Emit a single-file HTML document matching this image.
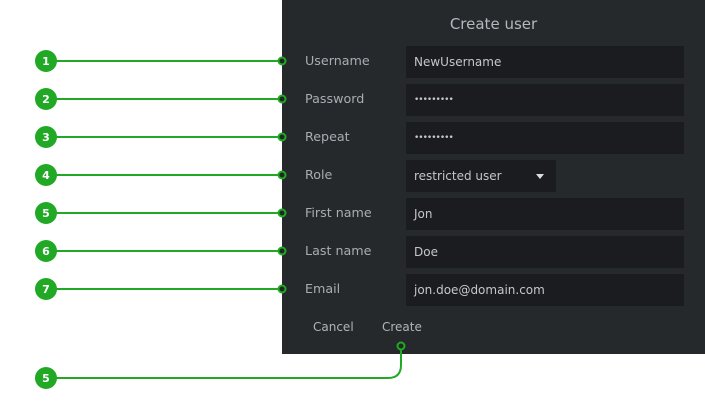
<!DOCTYPE html><html><head><style>
body{margin:0;width:705px;height:409px;background:#fff;position:relative;overflow:hidden;font-family:"DejaVu Sans","Liberation Sans",sans-serif}
.panel{position:absolute;left:282px;top:0;width:423px;height:354px;background:#26292c}
.t{position:absolute;left:0;width:423px;top:15px;text-align:center;color:#b4b8bc;font-size:15px}
.l{position:absolute;left:23px;color:#a9adb1;font-size:12.7px}
.i{position:absolute;left:124px;width:278px;height:32px;background:#1a1c1f;color:#c4c7ca;font-size:12px;line-height:32px;padding-left:8px;box-sizing:border-box}
.p{font-size:9px;letter-spacing:-1px}
.b{position:absolute;top:320px;color:#b0b4b8;font-size:12px}
</style></head><body>
<div class="panel">
<div class="t">Create user</div>
<div class="l" style="top:53px">Username</div><div class="i" style="top:46px">NewUsername</div>
<div class="l" style="top:91px">Password</div><div class="i p" style="top:84px">•••••••••</div>
<div class="l" style="top:129px">Repeat</div><div class="i p" style="top:122px">•••••••••</div>
<div class="l" style="top:167px">Role</div><div class="i" style="top:160px;width:150px">restricted user<span style="position:absolute;left:130px;top:14px;border-left:4px solid transparent;border-right:4px solid transparent;border-top:5px solid #ddd;width:0;height:0"></span></div>
<div class="l" style="top:205px">First name</div><div class="i" style="top:198px">Jon</div>
<div class="l" style="top:243px">Last name</div><div class="i" style="top:236px">Doe</div>
<div class="l" style="top:281px">Email</div><div class="i" style="top:274px">jon.doe@domain.com</div>
<div class="b" style="left:31px">Cancel</div><div class="b" style="left:100px">Create</div>
</div>
<svg width="705" height="409" style="position:absolute;left:0;top:0" font-family="DejaVu Sans, Liberation Sans, sans-serif">
<g stroke="#21a926" stroke-width="2" fill="none">
<line x1="45" y1="61" x2="282" y2="61"/><line x1="45" y1="99" x2="282" y2="99"/><line x1="45" y1="137" x2="282" y2="137"/><line x1="45" y1="175" x2="282" y2="175"/><line x1="45" y1="213" x2="282" y2="213"/><line x1="45" y1="251" x2="282" y2="251"/><line x1="45" y1="289" x2="282" y2="289"/>
<path d="M45 378 H388 Q401 378 401 365 V347"/>
</g>
<g fill="#1e2a1f" stroke="#21a926" stroke-width="2">
<circle cx="282" cy="61" r="3.5"/><circle cx="282" cy="99" r="3.5"/><circle cx="282" cy="137" r="3.5"/><circle cx="282" cy="175" r="3.5"/><circle cx="282" cy="213" r="3.5"/><circle cx="282" cy="251" r="3.5"/><circle cx="282" cy="289" r="3.5"/><circle cx="401" cy="346" r="3.5"/>
</g>
<g fill="#21a926"><circle cx="46" cy="61" r="11"/><circle cx="46" cy="99" r="11"/><circle cx="46" cy="137" r="11"/><circle cx="46" cy="175" r="11"/><circle cx="46" cy="213" r="11"/><circle cx="46" cy="251" r="11"/><circle cx="46" cy="289" r="11"/><circle cx="46" cy="378" r="11"/></g>
<g fill="#fff" font-size="11" font-weight="bold" text-anchor="middle">
<text x="46" y="65">1</text><text x="46" y="103">2</text><text x="46" y="141">3</text><text x="46" y="179">4</text><text x="46" y="217">5</text><text x="46" y="255">6</text><text x="46" y="293">7</text><text x="46" y="382">5</text></g>
</svg>
</body></html>
